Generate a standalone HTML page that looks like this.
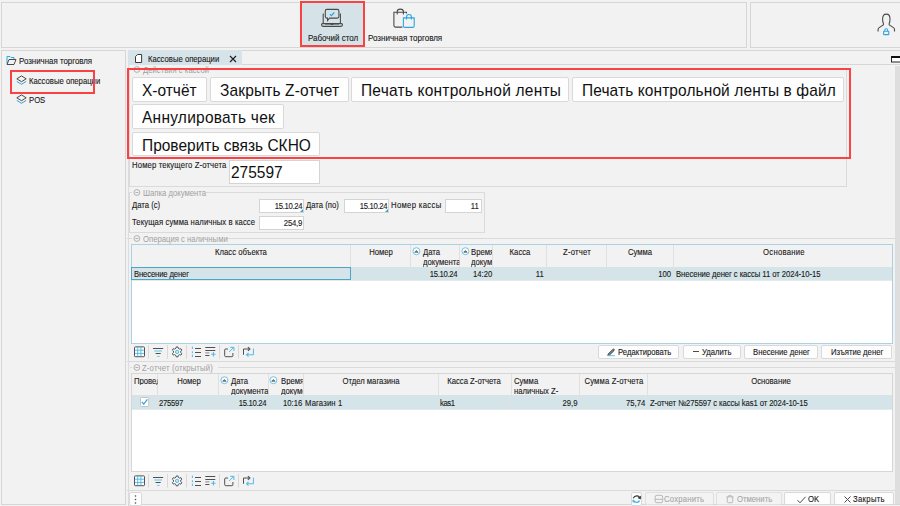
<!DOCTYPE html>
<html><head><meta charset="utf-8">
<style>
*{box-sizing:border-box;margin:0;padding:0}
html,body{width:900px;height:506px;overflow:hidden;background:#f2f2f2;font-family:"Liberation Sans",sans-serif;color:#1a1a1a}
.a{position:absolute}
.t{position:absolute;white-space:nowrap;line-height:1;-webkit-text-stroke:0.12px currentColor}
.big{position:absolute;white-space:nowrap;line-height:1;color:#111;-webkit-text-stroke:0}
.gt{color:#a0a0a0;-webkit-text-stroke:0}
svg{position:absolute;overflow:visible}
</style></head><body>

<div class="a" style="left:1px;top:2px;width:746px;height:46px;border:1px solid #d6d6d6"></div>
<div class="a" style="left:750px;top:2px;width:152px;height:46px;border:1px solid #d6d6d6"></div>
<div class="a" style="left:300px;top:2px;width:64px;height:44px;background:#d5e3e8"></div>
<div class="a" style="left:300px;top:1px;width:65px;height:46px;border:2px solid #fa4242"></div>
<svg style="left:319px;top:7px" width="26" height="22" viewBox="0 0 26 22">
 <path d="M4.2 16.3 V6.5 M21.4 6.5 V16.3" fill="none" stroke="#4a4a4a" stroke-width="1.1"/>
 <path d="M7.8 2.4 H18.4 Q19.9 2.4 19.9 3.9 V9.6 Q19.9 11.1 18.4 11.1 H10.6 L8.5 13.6 V11.1 H7.8 Q6.3 11.1 6.3 9.6 V3.9 Q6.3 2.4 7.8 2.4Z" fill="none" stroke="#4a4a4a" stroke-width="1.1"/>
 <path d="M10.9 7.3 L12.4 8.6 L15.3 5.5" fill="none" stroke="#2ba6de" stroke-width="1.2"/>
 <path d="M3.6 16.6 H22.4 Q23.5 16.6 23.5 17.8 Q23.5 19.4 22 19.4 H4 Q2.5 19.4 2.5 17.8 Q2.5 16.6 3.6 16.6Z" fill="none" stroke="#4a4a4a" stroke-width="1.1"/>
 <path d="M6 17 H11.5 Q12.9 18 14.3 17 H20" fill="none" stroke="#4a4a4a" stroke-width="1.1"/>
</svg>
<div class="t " style="top:33.65px;font-size:8.80px;left:307.5px;transform-origin:0 0;transform:scaleX(0.9091);">Рабочий стол</div>
<svg style="left:392px;top:7px" width="26" height="22" viewBox="0 0 26 22">
 <path d="M10.4 20.1 H3.4 Q1.9 20.1 1.9 18.6 V5.2 H14.5 V6.5" fill="none" stroke="#4a4a4a" stroke-width="1.1"/>
 <path d="M5.2 7.5 V4.6 Q5.2 2.1 8.3 2.1 Q11.4 2.1 11.4 4.6 V7.5" fill="none" stroke="#4a4a4a" stroke-width="1.1"/>
 <path d="M11.4 10.9 H22.2 V18.9 Q22.2 20.4 20.7 20.4 H12.9 Q11.4 20.4 11.4 18.9Z" fill="none" stroke="#2ba6de" stroke-width="1.1"/>
 <path d="M14.5 12.4 V9.9 Q14.5 7.5 16.95 7.5 Q19.4 7.5 19.4 9.9 V12.4" fill="none" stroke="#2ba6de" stroke-width="1.1"/>
</svg>
<div class="t " style="top:33.65px;font-size:8.80px;left:367.5px;transform-origin:0 0;transform:scaleX(0.9091);">Розничная торговля</div>
<svg style="left:876px;top:13px" width="20" height="23" viewBox="0 0 20 23">
 <path d="M2.1 18.6 V16.3 Q2.1 15.3 3.2 14.6 L7.3 11.9 Q7.6 11.4 7.4 10.5 Q6.6 9 6.6 6 Q6.6 1.1 10.3 1.1 Q14 1.1 14 6 Q14 9 13.2 10.5 Q13 11.4 13.3 11.9 L17.4 14.6 Q18.5 15.3 18.5 16.3 V18.6" fill="none" stroke="#4a4a4a" stroke-width="1.1"/>
 <rect x="7.6" y="18.2" width="5.2" height="3.4" rx="0.7" fill="none" stroke="#2ba6de" stroke-width="1.1"/>
 <path d="M8.8 18.2 V17 Q8.8 15.6 10.2 15.6 Q11.6 15.6 11.6 17 V18.2" fill="none" stroke="#2ba6de" stroke-width="1"/>
</svg>
<div class="a" style="left:1px;top:50px;width:125px;height:455px;border:1px solid #d6d6d6"></div>
<svg style="left:6px;top:55px" width="11" height="11" viewBox="0 0 11 11">
 <path d="M1 8.5 V1.5 H4 L5 2.5 H8 V4" fill="none" stroke="#2ba6de" stroke-width="1"/>
 <path d="M1 9.5 L3 4.5 H10 L8 9.5Z" fill="none" stroke="#4a4a4a" stroke-width="1"/>
</svg>
<div class="t " style="top:57.24px;font-size:8.69px;left:19px;transform-origin:0 0;transform:scaleX(0.9091);">Розничная торговля</div>
<svg style="left:16px;top:75px" width="11" height="10" viewBox="0 0 11 10">
 <path d="M5.5 0.9 L10.2 3.8 L5.5 6.7 L0.8 3.8Z" fill="none" stroke="#4a4a4a" stroke-width="1"/>
 <path d="M0.8 6.4 L5.5 9.3 L10.2 6.4" fill="none" stroke="#2ba6de" stroke-width="1"/>
</svg>
<svg style="left:16px;top:94px" width="11" height="10" viewBox="0 0 11 10">
 <path d="M5.5 0.9 L10.2 3.8 L5.5 6.7 L0.8 3.8Z" fill="none" stroke="#4a4a4a" stroke-width="1"/>
 <path d="M0.8 6.4 L5.5 9.3 L10.2 6.4" fill="none" stroke="#2ba6de" stroke-width="1"/>
</svg>
<div class="t " style="top:77.43px;font-size:8.47px;left:29px;transform-origin:0 0;transform:scaleX(0.9091);">Кассовые операции</div>
<div class="t " style="top:96.43px;font-size:8.47px;left:29px;transform-origin:0 0;transform:scaleX(0.9091);">POS</div>
<div class="a" style="left:10px;top:70px;width:85px;height:24px;border:2px solid #fa4242"></div>
<div class="a" style="left:128px;top:64px;width:772px;height:1px;background:#d6d6d6"></div>
<div class="a" style="left:128px;top:50px;width:772px;height:1px;background:#d6d6d6"></div>
<div class="a" style="left:128px;top:50px;width:114px;height:15px;background:#d6e4e9"></div>
<svg style="left:134px;top:54px" width="9" height="10" viewBox="0 0 9 10">
 <path d="M1.5 2.6 L3.6 0.5 H7.6 V8.5 H1.5Z" fill="#fff" stroke="#3a3a3a" stroke-width="1" stroke-linejoin="round"/>
</svg>
<div class="t " style="top:54.93px;font-size:8.47px;left:148px;transform-origin:0 0;transform:scaleX(0.9091);">Кассовые операции</div>
<svg style="left:229px;top:55px" width="8" height="8" viewBox="0 0 8 8">
 <path d="M1 1 L7 7 M7 1 L1 7" stroke="#222" stroke-width="1.2"/>
</svg>
<svg style="left:891px;top:55px" width="10" height="8" viewBox="0 0 10 8">
 <rect x="0.5" y="1.5" width="9" height="5.5" fill="#fff" stroke="#222" stroke-width="1"/>
 <rect x="0.5" y="1" width="9" height="2" fill="#111"/>
</svg>
<div class="a" style="left:895px;top:66px;width:5px;height:438px;background:#dedede"></div>
<div class="a" style="left:128px;top:65px;width:1px;height:441px;background:#dcdcdc"></div>
<div class="a" style="left:129px;top:69px;width:718px;height:118px;border:1px solid #dadada"></div>
<div class="a" style="left:132px;top:64.5px;width:82px;height:10px;background:#f2f2f2"></div>
<svg style="left:133px;top:65.8px" width="8" height="7" viewBox="0 0 8 7"><circle cx="3.9" cy="3.5" r="2.9" fill="none" stroke="#a8a8a8" stroke-width="0.9"/><path d="M2.4 3.5 H5.4" stroke="#a8a8a8" stroke-width="0.9"/></svg>
<div class="t gt" style="top:65.93px;font-size:8.47px;left:142.5px;transform-origin:0 0;transform:scaleX(0.9091);">Действия с кассой</div>
<div class="a" style="left:132px;top:77px;width:75px;height:25px;background:#fefefe;border:1px solid #d9d9d9;border-radius:2px"></div>
<div class="t big" style="top:82.69px;font-size:15.96px;left:142px;transform-origin:0 0;transform:scaleX(0.9709);">X-отчёт</div>
<div class="a" style="left:210px;top:77px;width:139px;height:25px;background:#fefefe;border:1px solid #d9d9d9;border-radius:2px"></div>
<div class="t big" style="top:82.69px;font-size:15.96px;left:220px;transform-origin:0 0;transform:scaleX(0.9709);letter-spacing:0.144px;">Закрыть Z-отчет</div>
<div class="a" style="left:351px;top:77px;width:218px;height:25px;background:#fefefe;border:1px solid #d9d9d9;border-radius:2px"></div>
<div class="t big" style="top:82.69px;font-size:15.96px;left:361px;transform-origin:0 0;transform:scaleX(0.9709);letter-spacing:0.227px;">Печать контрольной ленты</div>
<div class="a" style="left:572px;top:77px;width:272px;height:25px;background:#fefefe;border:1px solid #d9d9d9;border-radius:2px"></div>
<div class="t big" style="top:82.69px;font-size:15.96px;left:582px;transform-origin:0 0;transform:scaleX(0.9709);letter-spacing:0.103px;">Печать контрольной ленты в файл</div>
<div class="a" style="left:132px;top:104px;width:152px;height:25px;background:#fefefe;border:1px solid #d9d9d9;border-radius:2px"></div>
<div class="t big" style="top:109.69px;font-size:15.96px;left:142px;transform-origin:0 0;transform:scaleX(0.9709);letter-spacing:0.258px;">Аннулировать чек</div>
<div class="a" style="left:132px;top:132px;width:188px;height:24px;background:#fefefe;border:1px solid #d9d9d9;border-radius:2px"></div>
<div class="t big" style="top:137.69px;font-size:15.96px;left:142px;transform-origin:0 0;transform:scaleX(0.9709);">Проверить связь СКНО</div>
<div class="a" style="left:127px;top:68px;width:724px;height:91px;border:2px solid #fa4242"></div>
<div class="t " style="top:161.43px;font-size:8.47px;left:132px;transform-origin:0 0;transform:scaleX(0.9091);letter-spacing:0.160px;">Номер текущего Z-отчета</div>
<div class="a" style="left:229px;top:160px;width:91px;height:24px;background:#fff;border:1px solid #d4d4d4"></div>
<div class="t big" style="top:165.19px;font-size:15.96px;left:231px;transform-origin:0 0;transform:scaleX(0.9709);">275597</div>
<div class="a" style="left:129px;top:192px;width:356px;height:41px;border:1px solid #dadada"></div>
<div class="a" style="left:132px;top:187.3px;width:74px;height:10px;background:#f2f2f2"></div>
<svg style="left:133px;top:188.6px" width="8" height="7" viewBox="0 0 8 7"><circle cx="3.9" cy="3.5" r="2.9" fill="none" stroke="#a8a8a8" stroke-width="0.9"/><path d="M2.4 3.5 H5.4" stroke="#a8a8a8" stroke-width="0.9"/></svg>
<div class="t gt" style="top:188.73px;font-size:8.47px;left:142.5px;transform-origin:0 0;transform:scaleX(0.9091);">Шапка документа</div>
<div class="t " style="top:201.43px;font-size:8.47px;left:132px;transform-origin:0 0;transform:scaleX(0.9091);">Дата (с)</div>
<div class="a" style="left:259px;top:199px;width:45px;height:14px;background:#fff;border:1px solid #d4d4d4"></div>
<div class="t " style="top:202.43px;font-size:8.47px;right:598px;text-align:right;transform-origin:100% 0;transform:scaleX(0.9091);letter-spacing:-0.330px;">15.10.24</div>
<svg style="left:300px;top:209px" width="3" height="3"><path d="M3 0 V3 H0Z" fill="#2ba6de"/></svg>
<div class="t " style="top:201.43px;font-size:8.47px;left:306px;transform-origin:0 0;transform:scaleX(0.9091);">Дата (по)</div>
<div class="a" style="left:344px;top:199px;width:45px;height:14px;background:#fff;border:1px solid #d4d4d4"></div>
<div class="t " style="top:202.43px;font-size:8.47px;right:513px;text-align:right;transform-origin:100% 0;transform:scaleX(0.9091);letter-spacing:-0.330px;">15.10.24</div>
<svg style="left:385px;top:209px" width="3" height="3"><path d="M3 0 V3 H0Z" fill="#2ba6de"/></svg>
<div class="t " style="top:201.43px;font-size:8.47px;left:391px;transform-origin:0 0;transform:scaleX(0.9091);letter-spacing:0.363px;">Номер кассы</div>
<div class="a" style="left:445px;top:199px;width:37px;height:14px;background:#fff;border:1px solid #d4d4d4"></div>
<div class="t " style="top:202.43px;font-size:8.47px;right:421px;text-align:right;transform-origin:100% 0;transform:scaleX(0.9091);">11</div>
<div class="t " style="top:217.93px;font-size:8.47px;left:132px;transform-origin:0 0;transform:scaleX(0.9091);letter-spacing:0.095px;">Текущая сумма наличных в кассе</div>
<div class="a" style="left:259px;top:216px;width:45px;height:14px;background:#fff;border:1px solid #d4d4d4"></div>
<div class="t " style="top:219.43px;font-size:8.47px;right:598px;text-align:right;transform-origin:100% 0;transform:scaleX(0.9091);letter-spacing:-0.220px;">254,9</div>
<div class="a" style="left:127px;top:238px;width:768px;height:1px;background:#dadada"></div>
<div class="a" style="left:132px;top:233.2px;width:94px;height:10px;background:#f2f2f2"></div>
<svg style="left:133px;top:234.5px" width="8" height="7" viewBox="0 0 8 7"><circle cx="3.9" cy="3.5" r="2.9" fill="none" stroke="#a8a8a8" stroke-width="0.9"/><path d="M2.4 3.5 H5.4" stroke="#a8a8a8" stroke-width="0.9"/></svg>
<div class="t gt" style="top:234.63px;font-size:8.47px;left:142.5px;transform-origin:0 0;transform:scaleX(0.9091);">Операция с наличными</div>
<div class="a" style="left:131px;top:244px;width:762px;height:100px;background:#fff;border:1px solid #a9d3e4"></div>
<div class="a" style="left:132px;top:245px;width:760px;height:22px;background:#f2f2f2"></div>
<div class="a" style="left:132px;top:267px;width:760px;height:13px;background:#d4e4e9"></div>
<div class="a" style="left:132px;top:280px;width:760px;height:1px;background:#e3eaec"></div>
<div class="a" style="left:350px;top:245px;width:1px;height:35px;background:#e0e0e0"></div>
<div class="a" style="left:410px;top:245px;width:1px;height:35px;background:#e0e0e0"></div>
<div class="a" style="left:459px;top:245px;width:1px;height:35px;background:#e0e0e0"></div>
<div class="a" style="left:492px;top:245px;width:1px;height:35px;background:#e0e0e0"></div>
<div class="a" style="left:546px;top:245px;width:1px;height:35px;background:#e0e0e0"></div>
<div class="a" style="left:606px;top:245px;width:1px;height:35px;background:#e0e0e0"></div>
<div class="a" style="left:673px;top:245px;width:1px;height:35px;background:#e0e0e0"></div>
<div class="a" style="left:131px;top:267px;width:220px;height:13px;border:1px solid #4ea3c6"></div>
<div class="t " style="top:248.43px;font-size:8.47px;left:91px;width:300px;text-align:center;transform-origin:50% 0;transform:scaleX(0.9091);">Класс объекта</div>
<div class="t " style="top:248.43px;font-size:8.47px;left:230.5px;width:300px;text-align:center;transform-origin:50% 0;transform:scaleX(0.9091);">Номер</div>
<svg style="left:412.2px;top:246.7px" width="9" height="9" viewBox="0 0 9 9"><circle cx="4.4" cy="4.2" r="3.5" fill="#fff" stroke="#6cc6ec" stroke-width="1"/><path d="M2.7 5.3 L4.4 3.5 L6.1 5.3Z" fill="#777" stroke="#666" stroke-width="0.8" stroke-linejoin="round"/></svg>
<div class="t " style="top:248.43px;font-size:8.47px;left:423px;transform-origin:0 0;transform:scaleX(0.9091);">Дата</div>
<div class="t " style="top:258.43px;font-size:8.47px;left:423px;transform-origin:0 0;transform:scaleX(0.9091);width:39.60px;overflow:hidden;">документа</div>
<svg style="left:461.2px;top:246.7px" width="9" height="9" viewBox="0 0 9 9"><circle cx="4.4" cy="4.2" r="3.5" fill="#fff" stroke="#6cc6ec" stroke-width="1"/><path d="M2.7 5.3 L4.4 3.5 L6.1 5.3Z" fill="#777" stroke="#666" stroke-width="0.8" stroke-linejoin="round"/></svg>
<div class="t " style="top:248.43px;font-size:8.47px;left:471px;transform-origin:0 0;transform:scaleX(0.9091);width:23.10px;overflow:hidden;">Время</div>
<div class="t " style="top:258.43px;font-size:8.47px;left:471px;transform-origin:0 0;transform:scaleX(0.9091);width:23.10px;overflow:hidden;">документа</div>
<div class="t " style="top:248.43px;font-size:8.47px;left:369.5px;width:300px;text-align:center;transform-origin:50% 0;transform:scaleX(0.9091);">Касса</div>
<div class="t " style="top:248.43px;font-size:8.47px;left:427px;width:300px;text-align:center;transform-origin:50% 0;transform:scaleX(0.9091);letter-spacing:0.220px;">Z-отчет</div>
<div class="t " style="top:248.43px;font-size:8.47px;left:490px;width:300px;text-align:center;transform-origin:50% 0;transform:scaleX(0.9091);">Сумма</div>
<div class="t " style="top:248.43px;font-size:8.47px;left:633.5px;width:300px;text-align:center;transform-origin:50% 0;transform:scaleX(0.9091);letter-spacing:0.286px;">Основание</div>
<div class="t " style="top:269.93px;font-size:8.47px;left:134px;transform-origin:0 0;transform:scaleX(0.9091);letter-spacing:-0.165px;">Внесение денег</div>
<div class="t " style="top:269.93px;font-size:8.47px;right:443px;text-align:right;transform-origin:100% 0;transform:scaleX(0.9091);letter-spacing:-0.330px;">15.10.24</div>
<div class="t " style="top:269.93px;font-size:8.47px;left:473px;transform-origin:0 0;transform:scaleX(0.9091);">14:20</div>
<div class="t " style="top:269.93px;font-size:8.47px;right:356px;text-align:right;transform-origin:100% 0;transform:scaleX(0.9091);">11</div>
<div class="t " style="top:269.93px;font-size:8.47px;right:229px;text-align:right;transform-origin:100% 0;transform:scaleX(0.9091);">100</div>
<div class="t " style="top:269.93px;font-size:8.47px;left:675.5px;transform-origin:0 0;transform:scaleX(0.9091);letter-spacing:-0.088px;">Внесение денег с кассы 11 от 2024-10-15</div>
<svg style="left:0px;top:344px" width="260" height="18" viewBox="0 344 260 18">
 <rect x="134.5" y="346.9" width="10" height="9.8" rx="0.8" fill="#fff" stroke="#505050" stroke-width="1"/>
 <path d="M137.7 347.3 V356.4 M140.9 347.3 V356.4 M134.9 350.2 H144.1 M134.9 353.4 H144.1" stroke="#4fbbe8" stroke-width="0.95"/>
 <path d="M148.5 345 V358.6 M186.5 345 V358.6 M219.5 345 V358.6 M238.5 345 V358.6 M167.5 345 V358.6" stroke="#d9d9d9" stroke-width="1"/>
 <path d="M153 348.5 H163.2" stroke="#505050" stroke-width="1"/>
 <path d="M154.3 351 H162" stroke="#8fd3ef" stroke-width="1.5"/>
 <path d="M155.6 353.5 H160.7" stroke="#505050" stroke-width="1"/>
 <path d="M157 356.4 H159.8" stroke="#7ccbee" stroke-width="1"/>
 <path d="M176.00 348.31 L176.23 346.98 L177.97 346.98 L178.20 348.31 L179.66 349.16 L180.93 348.69 L181.80 350.19 L180.75 351.06 L180.75 352.74 L181.80 353.61 L180.93 355.11 L179.66 354.64 L178.20 355.49 L177.97 356.82 L176.23 356.82 L176.00 355.49 L174.54 354.64 L173.27 355.11 L172.40 353.61 L173.45 352.74 L173.45 351.06 L172.40 350.19 L173.27 348.69 L174.54 349.16Z" fill="#fff" stroke="#505050" stroke-width="1" stroke-linejoin="round"/>
 <circle cx="177.1" cy="351.9" r="1.7" fill="#bfe6f6" stroke="#4fbbe8" stroke-width="1"/>
 <path d="M192.4 346.6 V349 M192.4 351.3 V353.2 M192.4 354.6 V357" stroke="#4fbbe8" stroke-width="1"/>
 <path d="M195 348.5 H201 M195 352.5 H201 M195 356.5 H201" stroke="#505050" stroke-width="1"/>
 <path d="M205.3 347.5 H215.3 M205.3 350.5 H215.3 M205.3 355.5 H209.4" stroke="#505050" stroke-width="1"/>
 <path d="M205.3 352.9 H209.4" stroke="#888" stroke-width="1"/>
 <path d="M213.4 352.1 V356.4 M211.2 354.2 H215.6" stroke="#4fbbe8" stroke-width="1.1"/>
 <path d="M228 349 H225.7 Q224.7 349 224.7 350 V355.7 Q224.7 356.7 225.7 356.7 H231.9 Q232.9 356.7 232.9 355.7 V353" fill="none" stroke="#505050" stroke-width="1"/>
 <path d="M229.1 352 L233.6 347.5 M230.2 347.3 H233.9 V351" fill="none" stroke="#4fbbe8" stroke-width="1"/>
 <path d="M243.5 354.8 V349 H249.6" fill="none" stroke="#505050" stroke-width="1"/>
 <path d="M247.9 347.2 L249.9 349 L247.9 350.8" fill="none" stroke="#505050" stroke-width="1.1"/>
 <path d="M253.4 348.6 V354.8 H247" fill="none" stroke="#4fbbe8" stroke-width="1"/>
 <path d="M248.5 353 L246.6 354.8 L248.5 356.6" fill="none" stroke="#4fbbe8" stroke-width="1.1"/>
</svg>
<div class="a" style="left:598px;top:345px;width:81px;height:14px;background:#fdfdfd;border:1px solid #d9d9d9;border-radius:2px"></div>
<div class="t " style="top:348.43px;font-size:8.47px;left:617.5px;transform-origin:0 0;transform:scaleX(0.9091);">Редактировать</div>
<svg style="left:607px;top:347px" width="9" height="10" viewBox="0 0 9 10"><path d="M1.2 7 L5.9 2.3 Q6.5 1.7 7.1 2.3 Q7.7 2.9 7.1 3.5 L2.4 8.2 L0.9 8.4Z" fill="#888" stroke="#4a4a4a" stroke-width="1" stroke-linejoin="round"/><path d="M0.4 8.7 H7.9" stroke="#5cc3ee" stroke-width="1"/></svg>
<div class="a" style="left:683px;top:345px;width:58px;height:14px;background:#fdfdfd;border:1px solid #d9d9d9;border-radius:2px"></div>
<div class="t " style="top:348.43px;font-size:8.47px;left:702px;transform-origin:0 0;transform:scaleX(0.9091);">Удалить</div>
<div class="a" style="left:693px;top:351px;width:6px;height:1px;background:#4a4a4a"></div>
<div class="a" style="left:744px;top:345px;width:74px;height:14px;background:#fdfdfd;border:1px solid #d9d9d9;border-radius:2px"></div>
<div class="t " style="top:348.43px;font-size:8.47px;left:753.3px;transform-origin:0 0;transform:scaleX(0.9091);">Внесение денег</div>
<div class="a" style="left:821px;top:345px;width:71px;height:14px;background:#fdfdfd;border:1px solid #d9d9d9;border-radius:2px"></div>
<div class="t " style="top:348.43px;font-size:8.47px;left:831.3px;transform-origin:0 0;transform:scaleX(0.9091);">Изъятие денег</div>
<div class="a" style="left:127px;top:361px;width:768px;height:1px;background:#dadada"></div>
<div class="a" style="left:130px;top:367px;width:765px;height:1px;background:#dadada"></div>
<div class="a" style="left:132px;top:362.3px;width:86px;height:10px;background:#f2f2f2"></div>
<svg style="left:133px;top:363.6px" width="8" height="7" viewBox="0 0 8 7"><circle cx="3.9" cy="3.5" r="2.9" fill="none" stroke="#a8a8a8" stroke-width="0.9"/><path d="M2.4 3.5 H5.4" stroke="#a8a8a8" stroke-width="0.9"/></svg>
<div class="t gt" style="top:363.73px;font-size:8.47px;left:141.8px;transform-origin:0 0;transform:scaleX(0.9091);letter-spacing:0.187px;">Z-отчет (открытый)</div>
<div class="a" style="left:131px;top:373px;width:762px;height:99px;background:#fff;border:1px solid #d6d6d6"></div>
<div class="a" style="left:132px;top:374px;width:760px;height:21px;background:#f2f2f2"></div>
<div class="a" style="left:132px;top:395px;width:760px;height:14px;background:#d4e4e9"></div>
<div class="a" style="left:132px;top:409px;width:760px;height:1px;background:#e3eaec"></div>
<div class="a" style="left:157px;top:374px;width:1px;height:35px;background:#e0e0e0"></div>
<div class="a" style="left:218px;top:374px;width:1px;height:35px;background:#e0e0e0"></div>
<div class="a" style="left:268px;top:374px;width:1px;height:35px;background:#e0e0e0"></div>
<div class="a" style="left:303px;top:374px;width:1px;height:35px;background:#e0e0e0"></div>
<div class="a" style="left:438px;top:374px;width:1px;height:35px;background:#e0e0e0"></div>
<div class="a" style="left:511px;top:374px;width:1px;height:35px;background:#e0e0e0"></div>
<div class="a" style="left:579px;top:374px;width:1px;height:35px;background:#e0e0e0"></div>
<div class="a" style="left:647px;top:374px;width:1px;height:35px;background:#e0e0e0"></div>
<div class="t " style="top:376.53px;font-size:8.47px;left:133.5px;transform-origin:0 0;transform:scaleX(0.9091);width:26.40px;overflow:hidden;">Проведен</div>
<div class="t " style="top:376.53px;font-size:8.47px;left:38.5px;width:300px;text-align:center;transform-origin:50% 0;transform:scaleX(0.9091);">Номер</div>
<svg style="left:220.2px;top:375.7px" width="9" height="9" viewBox="0 0 9 9"><circle cx="4.4" cy="4.2" r="3.5" fill="#fff" stroke="#6cc6ec" stroke-width="1"/><path d="M2.7 5.3 L4.4 3.5 L6.1 5.3Z" fill="#777" stroke="#666" stroke-width="0.8" stroke-linejoin="round"/></svg>
<div class="t " style="top:376.53px;font-size:8.47px;left:231px;transform-origin:0 0;transform:scaleX(0.9091);">Дата</div>
<div class="t " style="top:386.93px;font-size:8.47px;left:231px;transform-origin:0 0;transform:scaleX(0.9091);width:40.70px;overflow:hidden;">документа</div>
<svg style="left:269.2px;top:375.7px" width="9" height="9" viewBox="0 0 9 9"><circle cx="4.4" cy="4.2" r="3.5" fill="#fff" stroke="#6cc6ec" stroke-width="1"/><path d="M2.7 5.3 L4.4 3.5 L6.1 5.3Z" fill="#777" stroke="#666" stroke-width="0.8" stroke-linejoin="round"/></svg>
<div class="t " style="top:376.53px;font-size:8.47px;left:281px;transform-origin:0 0;transform:scaleX(0.9091);width:24.20px;overflow:hidden;">Время</div>
<div class="t " style="top:386.93px;font-size:8.47px;left:281px;transform-origin:0 0;transform:scaleX(0.9091);width:24.20px;overflow:hidden;">документа</div>
<div class="t " style="top:376.53px;font-size:8.47px;left:221px;width:300px;text-align:center;transform-origin:50% 0;transform:scaleX(0.9091);">Отдел магазина</div>
<div class="t " style="top:376.53px;font-size:8.47px;left:324.3px;width:300px;text-align:center;transform-origin:50% 0;transform:scaleX(0.9091);">Касса Z-отчета</div>
<div class="t " style="top:376.53px;font-size:8.47px;left:514px;transform-origin:0 0;transform:scaleX(0.9091);">Сумма</div>
<div class="t " style="top:386.93px;font-size:8.47px;left:514px;transform-origin:0 0;transform:scaleX(0.9091);width:71.50px;overflow:hidden;">наличных Z-</div>
<div class="t " style="top:376.53px;font-size:8.47px;left:464px;width:300px;text-align:center;transform-origin:50% 0;transform:scaleX(0.9091);letter-spacing:0.165px;">Сумма Z-отчета</div>
<div class="t " style="top:376.53px;font-size:8.47px;left:620.5px;width:300px;text-align:center;transform-origin:50% 0;transform:scaleX(0.9091);">Основание</div>
<svg style="left:140px;top:397px" width="10" height="10" viewBox="0 0 10 10"><rect x="0.5" y="0.5" width="8.2" height="9" rx="1" fill="#fff" stroke="#c4c4c4" stroke-width="1"/><path d="M1.9 5 L3.8 7.1 L7.4 2.3" fill="none" stroke="#3f9fe3" stroke-width="1.3"/></svg>
<div class="t " style="top:398.93px;font-size:8.47px;left:159px;transform-origin:0 0;transform:scaleX(0.9091);letter-spacing:-0.308px;">275597</div>
<div class="t " style="top:398.93px;font-size:8.47px;right:634px;text-align:right;transform-origin:100% 0;transform:scaleX(0.9091);letter-spacing:-0.330px;">15.10.24</div>
<div class="t " style="top:398.93px;font-size:8.47px;left:283px;transform-origin:0 0;transform:scaleX(0.9091);">10:16</div>
<div class="t " style="top:398.93px;font-size:8.47px;left:305.2px;transform-origin:0 0;transform:scaleX(0.9091);letter-spacing:0.165px;">Магазин 1</div>
<div class="t " style="top:398.93px;font-size:8.47px;left:439.7px;transform-origin:0 0;transform:scaleX(0.9091);letter-spacing:-0.440px;">kas1</div>
<div class="t " style="top:398.93px;font-size:8.47px;right:323px;text-align:right;transform-origin:100% 0;transform:scaleX(0.9091);">29,9</div>
<div class="t " style="top:398.93px;font-size:8.47px;right:254.5px;text-align:right;transform-origin:100% 0;transform:scaleX(0.9091);">75,74</div>
<div class="t " style="top:398.93px;font-size:8.47px;left:649.5px;transform-origin:0 0;transform:scaleX(0.9091);letter-spacing:-0.099px;">Z-отчет №275597 с кассы kas1 от 2024-10-15</div>
<svg style="left:0px;top:473px" width="260" height="18" viewBox="0 344 260 18">
 <rect x="134.5" y="346.9" width="10" height="9.8" rx="0.8" fill="#fff" stroke="#505050" stroke-width="1"/>
 <path d="M137.7 347.3 V356.4 M140.9 347.3 V356.4 M134.9 350.2 H144.1 M134.9 353.4 H144.1" stroke="#4fbbe8" stroke-width="0.95"/>
 <path d="M148.5 345 V358.6 M186.5 345 V358.6 M219.5 345 V358.6 M238.5 345 V358.6 M167.5 345 V358.6" stroke="#d9d9d9" stroke-width="1"/>
 <path d="M153 348.5 H163.2" stroke="#505050" stroke-width="1"/>
 <path d="M154.3 351 H162" stroke="#8fd3ef" stroke-width="1.5"/>
 <path d="M155.6 353.5 H160.7" stroke="#505050" stroke-width="1"/>
 <path d="M157 356.4 H159.8" stroke="#7ccbee" stroke-width="1"/>
 <path d="M176.00 348.31 L176.23 346.98 L177.97 346.98 L178.20 348.31 L179.66 349.16 L180.93 348.69 L181.80 350.19 L180.75 351.06 L180.75 352.74 L181.80 353.61 L180.93 355.11 L179.66 354.64 L178.20 355.49 L177.97 356.82 L176.23 356.82 L176.00 355.49 L174.54 354.64 L173.27 355.11 L172.40 353.61 L173.45 352.74 L173.45 351.06 L172.40 350.19 L173.27 348.69 L174.54 349.16Z" fill="#fff" stroke="#505050" stroke-width="1" stroke-linejoin="round"/>
 <circle cx="177.1" cy="351.9" r="1.7" fill="#bfe6f6" stroke="#4fbbe8" stroke-width="1"/>
 <path d="M192.4 346.6 V349 M192.4 351.3 V353.2 M192.4 354.6 V357" stroke="#4fbbe8" stroke-width="1"/>
 <path d="M195 348.5 H201 M195 352.5 H201 M195 356.5 H201" stroke="#505050" stroke-width="1"/>
 <path d="M205.3 347.5 H215.3 M205.3 350.5 H215.3 M205.3 355.5 H209.4" stroke="#505050" stroke-width="1"/>
 <path d="M205.3 352.9 H209.4" stroke="#888" stroke-width="1"/>
 <path d="M213.4 352.1 V356.4 M211.2 354.2 H215.6" stroke="#4fbbe8" stroke-width="1.1"/>
 <path d="M228 349 H225.7 Q224.7 349 224.7 350 V355.7 Q224.7 356.7 225.7 356.7 H231.9 Q232.9 356.7 232.9 355.7 V353" fill="none" stroke="#505050" stroke-width="1"/>
 <path d="M229.1 352 L233.6 347.5 M230.2 347.3 H233.9 V351" fill="none" stroke="#4fbbe8" stroke-width="1"/>
 <path d="M243.5 354.8 V349 H249.6" fill="none" stroke="#505050" stroke-width="1"/>
 <path d="M247.9 347.2 L249.9 349 L247.9 350.8" fill="none" stroke="#505050" stroke-width="1.1"/>
 <path d="M253.4 348.6 V354.8 H247" fill="none" stroke="#4fbbe8" stroke-width="1"/>
 <path d="M248.5 353 L246.6 354.8 L248.5 356.6" fill="none" stroke="#4fbbe8" stroke-width="1.1"/>
</svg>
<div class="a" style="left:128px;top:504px;width:772px;height:1px;background:#d6d6d6"></div>
<div class="a" style="left:127px;top:490px;width:768px;height:1px;background:#dadada"></div>
<div class="a" style="left:129px;top:492px;width:13px;height:14px;background:#fdfdfd;border:1px solid #d9d9d9;border-radius:2px"></div>
<svg style="left:134px;top:494px" width="3" height="11"><circle cx="1.5" cy="2" r="0.8" fill="#4a4a4a"/><circle cx="1.5" cy="5.5" r="0.8" fill="#4a4a4a"/><circle cx="1.5" cy="9" r="0.8" fill="#4a4a4a"/></svg>
<div class="a" style="left:631px;top:492px;width:11px;height:14px;background:#fdfdfd;border:1px solid #d9d9d9;border-radius:2px"></div>
<svg style="left:632px;top:494px" width="10" height="10" viewBox="0 0 10 10"><path d="M1.2 4.2 Q2.4 1.9 4.7 1.9 Q6.4 1.9 7.4 3" fill="none" stroke="#333" stroke-width="1.1"/><path d="M6.2 3.9 L8.7 2.2 L8.5 4.9Z" fill="#222" stroke="#222" stroke-width="0.6"/><path d="M1.6 6.9 Q2.7 8.4 4.8 8.4 Q6.7 8.4 7.6 6.7" fill="none" stroke="#39b3ea" stroke-width="1.4"/><path d="M0.8 5.8 L1 8.3 L3.2 7.6Z" fill="#39b3ea" stroke="#39b3ea" stroke-width="0.6"/></svg>
<div class="a" style="left:645px;top:492px;width:69px;height:13px;background:#f3f3f3;border:1px solid #e0e0e0;border-radius:2px"></div>
<div class="t " style="top:495.43px;font-size:8.47px;left:664px;transform-origin:0 0;transform:scaleX(0.9091);color:#a8a8a8;letter-spacing:0.253px;">Сохранить</div>
<svg style="left:654px;top:494px" width="10" height="10" viewBox="0 0 10 10"><rect x="1.1" y="1.3" width="7.6" height="7.4" rx="1.8" fill="none" stroke="#b8b8b8" stroke-width="1"/><path d="M1.1 5.3 H8.7" stroke="#b8b8b8" stroke-width="1"/></svg>
<div class="a" style="left:716px;top:492px;width:66px;height:13px;background:#f3f3f3;border:1px solid #e0e0e0;border-radius:2px"></div>
<div class="t " style="top:495.43px;font-size:8.47px;left:736.5px;transform-origin:0 0;transform:scaleX(0.9091);color:#a8a8a8;">Отменить</div>
<svg style="left:726px;top:494px" width="9" height="10" viewBox="0 0 9 10"><path d="M0.5 2.9 H7.5 M2.6 2.9 V1.7 H5.4 V2.9 M1.3 2.9 V7.6 Q1.3 8.7 2.4 8.7 H5.6 Q6.7 8.7 6.7 7.6 V2.9" fill="none" stroke="#b8b8b8" stroke-width="1"/></svg>
<div class="a" style="left:784px;top:492px;width:47px;height:13px;background:#fdfdfd;border:1px solid #d9d9d9;border-radius:2px"></div>
<div class="t " style="top:495.43px;font-size:8.47px;left:807.5px;transform-origin:0 0;transform:scaleX(0.9091);">OK</div>
<svg style="left:797px;top:496px" width="9" height="8" viewBox="0 0 9 8"><path d="M0.5 4.2 L3 6.8 L8.5 0.8" fill="none" stroke="#4a4a4a" stroke-width="1"/></svg>
<div class="a" style="left:834px;top:492px;width:60px;height:13px;background:#fdfdfd;border:1px solid #d9d9d9;border-radius:2px"></div>
<div class="t " style="top:495.43px;font-size:8.47px;left:853px;transform-origin:0 0;transform:scaleX(0.9091);letter-spacing:0.363px;">Закрыть</div>
<svg style="left:844px;top:496px" width="7" height="7" viewBox="0 0 7 7"><path d="M0.5 0.5 L6.5 6.5 M6.5 0.5 L0.5 6.5" fill="none" stroke="#4a4a4a" stroke-width="1"/></svg>
</body></html>
